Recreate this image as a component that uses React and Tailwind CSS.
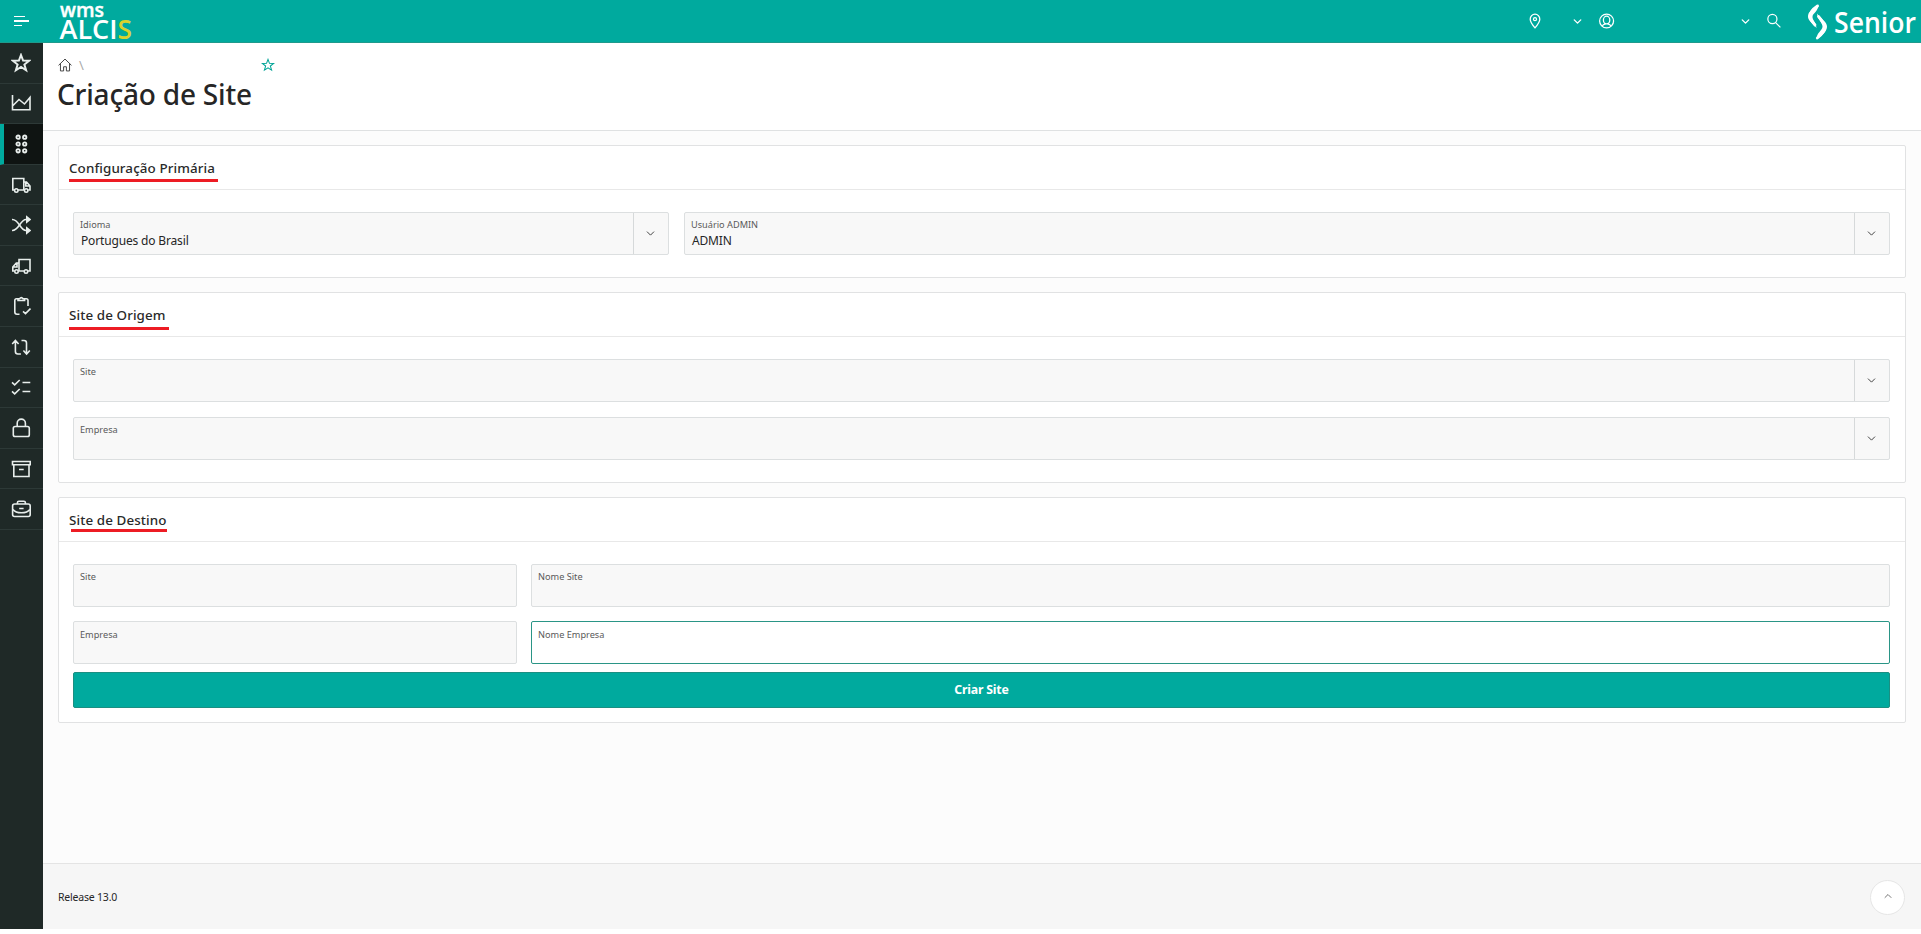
import { ChevronDown, ChevronUp } from 'lucide-react';

const Svg = ({ size = 20, sw = 1.6, className = '', children }) => (
    <svg width={size} height={size} viewBox="0 0 20 20" fill="none" stroke="currentColor" strokeWidth={sw} className={`block shrink-0 ${className}`} aria-hidden="true">
        {children}
    </svg>
);

const starPath = 'M10 2l2.100 5.600 6 .2-4.700 3.700 1.700 5.800-5.100-3.300-5.100 3.300 1.700-5.800L1.900 7.800l6-.2z';

const menu = [
    { id: 'favoritos', icon: <path d={starPath} strokeWidth="2" /> },
    { id: 'graficos', icon: <path d="M1.500 2v14.700h17.500V4.500L13.500 11 8 6.500l-6.500 6.500" /> },
    {
        id: 'modulos',
        active: true,
        icon: [3.2, 10, 16.8].map((y) => (
            <g key={y} strokeWidth="1.800">
                <circle cx="7.100" cy={y} r="1.700" />
                <circle cx="13.700" cy={y} r="1.700" />
            </g>
        )),
    },
    {
        id: 'entrada',
        icon: (
            <>
                <path d="M3.500 15H1.800V3.500h11V15H7M12.800 7h2.700l3.500 4v4h-1.800M12.700 15h.5M14.800 7.500v3.500h4" />
                <circle cx="5.300" cy="15.500" r="1.700" />
                <circle cx="15.200" cy="15.500" r="1.700" />
            </>
        ),
    },
    {
        id: 'transferencia',
        icon: (
            <>
                <path d="M1 4.500C8 4 9 15.500 15 15.500h2M1 15.500C8 16 9 4.500 15 4.500h2" />
                <path d="M15.800 2l3.200 2.500L15.800 7zM15.800 13l3.200 2.500-3.200 2.500z" fill="currentColor" />
            </>
        ),
    },
    {
        id: 'saida',
        icon: (
            <>
                <path d="M17 15h2V3.500H8V15h5M8 7H5.300l-3.500 4v4h1.700M8 15h-.7M6 7.500v3.500H2" />
                <circle cx="15" cy="15.500" r="1.700" />
                <circle cx="5.500" cy="15.500" r="1.700" />
            </>
        ),
    },
    {
        id: 'inventario',
        icon: (
            <>
                <path d="M8.500 18.200H6Q3.800 18.200 3.800 16V4.500Q3.800 2.800 5.500 2.800H7M13.800 2.800h1.500q1.700 0 1.700 1.700V10" />
                <path d="M7 4.500V2.800h1.500q1.800-2.400 3.600 0h1.500v1.700zM12 15.300l2.500 2.300 5-5" />
            </>
        ),
    },
    { id: 'reposicao', icon: <path d="M1.200 7l3.200-3.500L7.600 7M4.400 4v10.500q0 2.500 2.500 2.500h3M10.500 3.500H13q2.500 0 2.500 2.500v10.500M12.400 13.500l3.200 3.500 3.200-3.500" /> },
    { id: 'tarefas', icon: <path d="M1 5.300l2.700 2.500L8.700 3M1 14.300l2.700 2.500L8.700 12M11.500 5.500h7.800M11.500 14.500h7.800" /> },
    {
        id: 'seguranca',
        icon: (
            <>
                <rect x="2.300" y="8.500" width="16" height="10" rx="1.800" />
                <path d="M6.200 8.500V5.200a4.100 4.100 0 0 1 8.200 0v3.300" />
            </>
        ),
    },
    { id: 'arquivo', icon: <path d="M1.500 2.500h17.700v3.300H1.500zM2.800 5.800v11.700H18V5.800M8 10.500h4.700" /> },
    {
        id: 'ferramentas',
        icon: (
            <>
                <rect x="1.600" y="5" width="17.600" height="12.500" rx="2" />
                <path d="M6.400 5V3.700q0-1.500 1.500-1.500h5q1.500 0 1.500 1.500V5M1.900 10.500q2.500 3.300 8.500 3.300t8.500-3.300M8.200 9.500h4.400" />
            </>
        ),
    },
];

const Field = ({ label, value, select, focused, labelClass = 'pt-[5px]', className = '' }) => (
    <div className={`flex h-[43px] rounded-[2px] border ${focused ? 'border-[#2a9586] bg-white' : 'border-[#dcdfe0] bg-[#f8f8f8]'} ${className}`}>
        <div className={`flex-1 pl-[6px] ${labelClass}`}>
            <div className="h-[14px] text-[9.200px] leading-[14px] text-[#5a5a5a]">{label}</div>
            {value && <div className="pl-px text-[12px] leading-[17px] tracking-[-0.160px] text-[#262626]">{value}</div>}
        </div>
        {select && (
            <div className="flex w-[35px] items-center justify-center border-l border-[#d6d9da] pr-px">
                <ChevronDown size={13} strokeWidth={1.8} className="text-[#404040]" />
            </div>
        )}
    </div>
);

const Card = ({ title, line, className, bodyClass = '', children }) => (
    <section className={`rounded-[2px] border border-[#e1e2e3] bg-white ${className}`}>
        <div className="h-[44px] border-b border-[#e8e8e8] pl-[10px]">
            <h2 className="h-[31px] pt-[12px] text-[13.400px] font-medium leading-[20px] tracking-[0.100px] text-[#2a2a2a]">{title}</h2>
            <div className={`h-[3px] bg-[#ed1c24] ${line}`} />
        </div>
        <div className={`pl-[14px] pr-[15px] pt-[22px] ${bodyClass}`}>{children}</div>
    </section>
);

const Header = () => (
    <header className="flex h-[43px] items-center border-b border-[#1f9a8c] bg-[#00aa9e] text-white">
        <div className="flex w-[60px] flex-col gap-[3px] pl-[14px]">
            <span className="h-[1.500px] w-[11px] bg-white" />
            <span className="h-[1.500px] w-[15px] bg-white" />
            <span className="h-[1.500px] w-[8px] bg-white" />
        </div>
        <svg width="76" height="42" viewBox="0 0 76 42" className="overflow-visible" fill="#fff" fontFamily="'Open Sans', sans-serif" fontWeight="600">
            <text x="0" y="17" fontSize="20" stroke="#fff" strokeWidth="0.400" textLength="44" lengthAdjust="spacingAndGlyphs">wms</text>
            <text x="-.5" y="39" fontSize="27" textLength="58" lengthAdjust="spacingAndGlyphs">ALCI</text>
            <text x="57.500" y="39" fontSize="27" textLength="14.500" lengthAdjust="spacingAndGlyphs" fill="#d8d22e">S</text>
        </svg>
        <div className="ml-auto flex items-center">
            <Svg size={16} sw={1.6}>
                <path d="M10 18.500Q4 11.500 4 7.700a6 6.200 0 0 1 12 0Q16 11.500 10 18.500z" />
                <circle cx="10" cy="7.700" r="1.900" />
            </Svg>
            <ChevronDown size={13} strokeWidth={2.5} className="ml-[28px]" />
            <Svg size={16} sw={1.6} className="ml-[15px]">
                <circle cx="9.500" cy="10" r="8.700" />
                <ellipse cx="9.500" cy="8.800" rx="4" ry="4.800" />
                <path d="M4 16.500Q5 14.500 7.500 14v-1.500M15 16.500Q14 14.500 11.500 14v-1.500" />
            </Svg>
            <ChevronDown size={13} strokeWidth={2.5} className="ml-[124px]" />
            <Svg size={16} sw={1.5} className="ml-[14px]">
                <circle cx="8" cy="7.500" r="5.700" />
                <path d="M12 12l6 6" />
            </Svg>
            <svg width="113" height="42" viewBox="0 0 113 42" className="ml-[26px] overflow-visible" fill="#fff">
                <path d="M10.500 4.500C4 9 0 12 0 16.500c0 4.500 4 5.500 8.500 11.500-.5-6-4-7.500-4-11 0-4 6-5.500 6-12.500z" />
                <path d="M8.500 39.500C15 35 19 31 19 26.500c0-4.500-5-6.500-10-13 .5 6 5.500 9 5.500 13 0 4-6 6-6 13z" />
                <path d="M9.500 6Q2 11 2.100 16.500 2.500 20 7 25M9.300 38Q17 32 16.900 26.500 16 23 10.500 16.500" fill="none" stroke="#fff" strokeWidth="2.800" strokeLinecap="round" />
                <text x="26" y="32.500" fontSize="29" fontFamily="'Open Sans', sans-serif" fontWeight="600" textLength="82" lengthAdjust="spacingAndGlyphs">Senior</text>
            </svg>
        </div>
    </header>
);

const Sidebar = () => (
    <nav className="w-[43px] shrink-0 bg-[#1f2927]" aria-label="Menu">
        <div className="flex h-[487px] flex-col">
            {menu.map((item) => (
                <button
                    key={item.id}
                    className={`flex w-full flex-1 items-center justify-center border-b border-b-[#2d3937] text-[#e8eeec] ${item.active ? 'border-l-4 border-l-[#00aa9e] bg-[#0f1412] pr-[5px]' : 'pr-px'}`}
                >
                    <Svg>{item.icon}</Svg>
                </button>
            ))}
        </div>
    </nav>
);

const App = () => (
    <div className="flex h-[934px] flex-col bg-white font-['Noto_Sans','Open_Sans',sans-serif]">
        <Header />
        <div className="flex h-[886px]">
            <Sidebar />
            <main className="flex flex-1 flex-col bg-[#fcfcfc]">
                <div className="h-[88px] border-b border-[#dfe1e2] bg-white pl-[15px] pt-[15px]">
                    <div className="flex h-[14px] items-center text-[#444]">
                        <Svg size={14} sw={1.4}>
                            <path d="M.8 10.500L10 1.500l9.200 9M3.500 8v10.500H8V12.500h4v6h4.500V8" />
                        </Svg>
                        <span className="ml-[7px] text-[13px] leading-[14px] text-[#aaa]">\</span>
                        <Svg size={14} sw={1.5} className="ml-[177px] text-[#00a497]">
                            <path d={starPath} />
                        </Svg>
                    </div>
                    <h1 className="-ml-px mt-[3px] text-[28px] font-medium leading-[38px] tracking-[-0.200px] text-[#262626]">Criação de Site</h1>
                </div>

                <div className="flex flex-1 flex-col pl-[15px] pr-[15px] pt-[14px]">
                    <Card title="Configuração Primária" className="h-[133px]" line="mt-[2px] w-[149px]" bodyClass="flex gap-[15px]">
                        <Field label="Idioma" value="Portugues do Brasil" select className="w-[596px]" />
                        <Field label="Usuário ADMIN" value="ADMIN" select className="flex-1" />
                    </Card>
                    <Card title="Site de Origem" className="mt-[14px] h-[191px]" line="mt-[3px] w-[100px]" bodyClass="flex flex-col gap-[15px]">
                        <Field label="Site" select />
                        <Field label="Empresa" select />
                    </Card>
                    <Card title="Site de Destino" className="mt-[14px] h-[226px]" line="ml-[2px] w-[96px]">
                        <div className="flex gap-[14px]">
                            <Field label="Site" className="w-[444px]" />
                            <Field label="Nome Site" className="flex-1" />
                        </div>
                        <div className="mt-[14px] flex gap-[14px]">
                            <Field label="Empresa" labelClass="pt-[6px]" className="w-[444px]" />
                            <Field label="Nome Empresa" labelClass="pt-[6px]" focused className="flex-1" />
                        </div>
                        <button className="mt-[8px] h-[36px] w-full rounded-[2px] border border-[#1b8f82] bg-[#00aa9e] text-[12.300px] font-bold tracking-[-0.200px] text-white">
                            Criar Site
                        </button>
                    </Card>
                </div>

                <footer className="flex h-[66px] items-center justify-between border-t border-[#e4e4e4] bg-[#f6f6f6] pl-[15px] pr-[16px]">
                    <span className="pt-[2px] text-[10.500px] tracking-[-0.200px] text-[#262626]">Release 13.0</span>
                    <button className="mt-px flex h-[35px] w-[35px] items-center justify-center rounded-full border border-[#e6e6e6] bg-white pb-[3px] text-[#777]">
                        <ChevronUp size={12} strokeWidth={2} />
                    </button>
                </footer>
            </main>
        </div>
    </div>
);

export default App;
